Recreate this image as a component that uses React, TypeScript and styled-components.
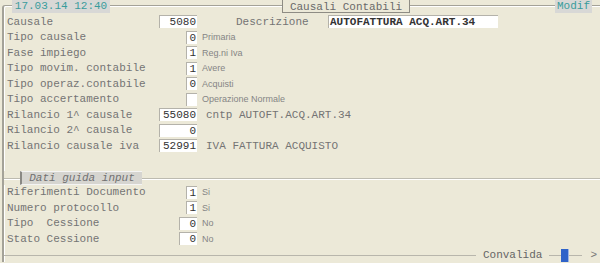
import React from "react"
import styled, { createGlobalStyle } from "styled-components"

const GlobalStyle = createGlobalStyle`
    html, body {
        margin:0;
        padding:0;
        background:#ece9d8;
    }
    body {
        width:600px;
        height:263px;
        overflow:hidden;
        font-family:"Liberation Mono", "Courier New", monospace;
        font-size:11px;
        color:#666;
    }
`

const mono = `font-family:"Liberation Mono", "Courier New", monospace; font-size:11px;`

const Frame = styled.div`
    margin:5px 0 0 2px;
    height:256px;
    border-top:1px solid #a4a298;
    border-left:2px solid #a4a298;
    box-shadow:inset 1px 1px 0 #fff;
    border-top-left-radius:3px;
    display:flex;
    flex-direction:column;
`

const Header = styled.div`
    margin-top:-6px;
    height:14px;
    display:flex;
    align-items:flex-start;
    padding-left:8px;
`

const Stamp = styled.div<{ $w:number, $ml:number }>`
    ${mono}
    width:${(p) => p.$w}px;
    margin-left:${(p) => p.$ml}px;
    height:13px;
    line-height:13px;
    background:#d8d8d6;
    color:#3a9c9c;
    text-align:center;
`

const TitleTab = styled.div`
    ${mono}
    width:128px;
    margin-left:172px;
    height:13px;
    line-height:14px;
    box-sizing:border-box;
    border:1px solid #8e8c84;
    border-top:none;
    background:#ece9d8;
    color:#6a6a6a;
    text-align:center;
`

const Rows = styled.div`
    padding-left:3px;
    display:flex;
    flex-direction:column;
`

const Row = styled.div<{ $h?:number }>`
    height:${(p) => p.$h ?? 15.5}px;
    display:flex;
    align-items:center;
`

const Cell = styled.div`
    width:190px;
    display:flex;
    align-items:center;
    justify-content:space-between;
`

const Label = styled.span`
    ${mono}
    color:#747474;
    white-space:pre;
`

const Box = styled.div<{ $w:number, $bold?:boolean, $left?:boolean }>`
    ${mono}
    width:${(p) => p.$w}px;
    height:13px;
    line-height:13px;
    box-sizing:border-box;
    background:#fff;
    border-top:1px solid #b4b2aa;
    border-left:1px solid #b4b2aa;
    color:#333;
    font-weight:${(p) => (p.$bold ? "bold" : "normal")};
    text-align:${(p) => (p.$left ? "left" : "right")};
    padding:0 1px 0 1px;
    white-space:pre;
    overflow:hidden;
`

const Hint = styled.span`
    font-family:"Liberation Sans", Arial, sans-serif;
    font-size:9px;
    color:#858585;
    margin-left:5px;
    white-space:pre;
`

const MonoHint = styled.span`
    ${mono}
    color:#747474;
    margin-left:9px;
    white-space:pre;
`

const DescLabel = styled.span`
    ${mono}
    color:#747474;
    margin-left:39px;
    width:92px;
`

const Divider = styled.div`
    margin-top:17px;
    height:14px;
    display:flex;
    align-items:stretch;
    background:linear-gradient(#ece9d8 7px, #bdbbb0 7px, #bdbbb0 8px, #fff 8px, #fff 9px, #ece9d8 9px);
`

const SectionTab = styled.div`
    ${mono}
    margin-left:16px;
    width:122px;
    box-sizing:border-box;
    background:#d6d5d0;
    border-left:2px solid #8a8984;
    border-top:1px solid #f4f4f4;
    border-bottom:1px solid #f4f4f4;
    color:#707070;
    font-style:italic;
    text-align:center;
    line-height:12px;
`

const Footer = styled.div`
    margin-top:auto;
    height:14px;
    display:flex;
    align-items:center;
`

const Rule = styled.div<{ $w?:number }>`
    ${(p) => (p.$w ? `width:${p.$w}px;` : "flex:1;")}
    height:1px;
    background:#b8b6ac;
`

const FootText = styled.span`
    ${mono}
    color:#666;
    margin:0 7px;
`

const Knob = styled.div`
    width:8px;
    height:13px;
    background:#2f63c9;
    border-right:1px solid #9cb4e4;
    box-sizing:border-box;
`

const Arrow = styled.span`
    ${mono}
    color:#777;
    margin:0 3px 0 8px;
`

type Field = {
    label:string
    value:string
    w:number
    hint?:string
    mono?:boolean
}

const top:Field[] = [
    { label:"Tipo causale", value:"0", w:11, hint:"Primaria" },
    { label:"Fase impiego", value:"1", w:11, hint:"Reg.ni Iva" },
    { label:"Tipo movim. contabile", value:"1", w:11, hint:"Avere" },
    { label:"Tipo operaz.contabile", value:"0", w:11, hint:"Acquisti" },
    { label:"Tipo accertamento", value:"", w:11, hint:"Operazione Normale" },
    { label:"Rilancio 1^ causale", value:"55080", w:38, hint:"cntp AUTOFT.ACQ.ART.34", mono:true },
    { label:"Rilancio 2^ causale", value:"0", w:38 },
    { label:"Rilancio causale iva", value:"52991", w:38, hint:"IVA FATTURA ACQUISTO", mono:true },
]

const guide:Field[] = [
    { label:"Riferimenti Documento", value:"1", w:11, hint:"Si" },
    { label:"Numero protocollo", value:"1", w:11, hint:"Si" },
    { label:"Tipo  Cessione", value:"0", w:18, hint:"No" },
    { label:"Stato Cessione", value:"0", w:18, hint:"No" },
]

const FieldRow = ({ f }:{ f:Field }) => (
    <Row>
        <Cell>
            <Label>{f.label}</Label>
            <Box $w={f.w}>{f.value}</Box>
        </Cell>
        {f.hint && (f.mono ? <MonoHint>{f.hint}</MonoHint> : <Hint>{f.hint}</Hint>)}
    </Row>
)

const App = () => {
    return (
        <>
            <GlobalStyle />
            <Frame>
                <Header>
                    <Stamp $w={98} $ml={0}>17.03.14 12:40</Stamp>
                    <TitleTab>Causali Contabili</TitleTab>
                    <Stamp $w={37} $ml={145}>Modif</Stamp>
                </Header>
                <Rows>
                    <Row>
                        <Cell>
                            <Label>Causale</Label>
                            <Box $w={38}>5080</Box>
                        </Cell>
                        <DescLabel>Descrizione</DescLabel>
                        <Box $w={170} $bold $left>AUTOFATTURA ACQ.ART.34</Box>
                    </Row>
                    {top.map((f) => <FieldRow key={f.label} f={f} />)}
                </Rows>
                <Divider>
                    <SectionTab>Dati guida input</SectionTab>
                </Divider>
                <Rows>
                    {guide.map((f) => <FieldRow key={f.label} f={f} />)}
                </Rows>
                <Footer>
                    <Rule />
                    <FootText>Convalida</FootText>
                    <Rule $w={12} />
                    <Knob />
                    <Rule $w={13} />
                    <Arrow>&gt;</Arrow>
                </Footer>
            </Frame>
        </>
    )
}

export default App
